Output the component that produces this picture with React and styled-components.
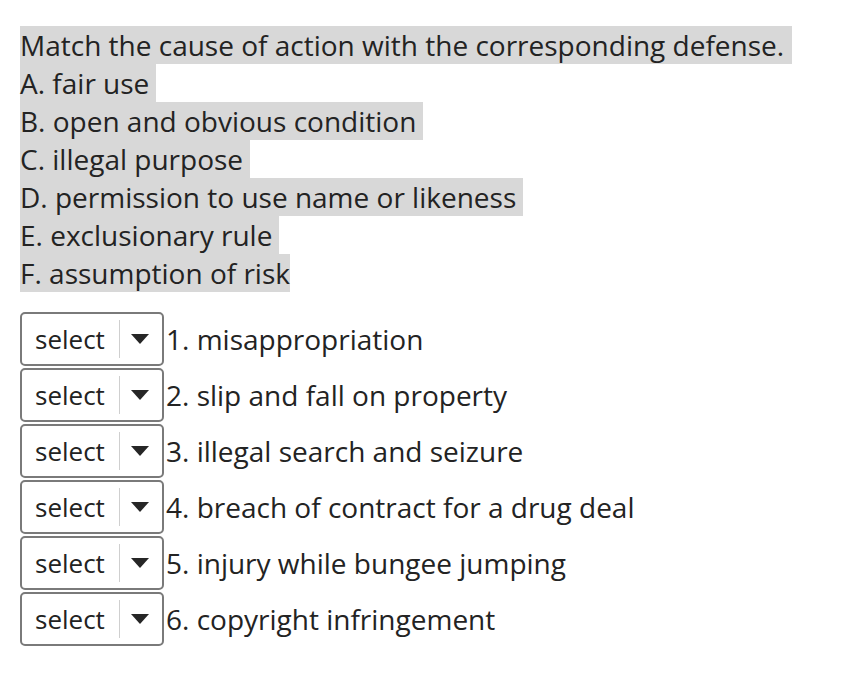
import React from "react";
import styled, { createGlobalStyle } from "styled-components";

const Global = createGlobalStyle`
  html, body { margin: 0; padding: 0; background: #fff; }
  body { font-family: "Open Sans", "DejaVu Sans", sans-serif; color: #232323; }
`;

const Page = styled.div`
  padding: 26px 20px 0 20px;
`;

const Prompt = styled.div`
  display: flex;
  flex-direction: column;
  align-items: flex-start;
`;

const Line = styled.div`
  background: #d8d8d8;
  font-size: 28px;
  line-height: 38px;
  height: 38px;
  padding-right: ${(p) => p.$pad ?? 7}px;
  white-space: nowrap;
`;

const Rows = styled.div`
  margin-top: 20px;
  display: flex;
  flex-direction: column;
  gap: 2px;
`;

const Row = styled.div`
  display: flex;
  align-items: center;
  gap: 2px;
`;

const SelectBox = styled.div`
  box-sizing: border-box;
  width: 144px;
  height: 54px;
  border: 2px solid #7a7a7a;
  border-radius: 5px;
  display: flex;
  align-items: center;
  padding-left: 13px;
  background: #fff;
`;

const SelectText = styled.span`
  font-size: 26px;
  color: #222;
  width: 84px;
`;

const Divider = styled.span`
  width: 1px;
  height: 38px;
  background: #cfcfcf;
`;

const Arrow = styled.span`
  margin-left: 11px;
  width: 0;
  height: 0;
  border-left: 9.5px solid transparent;
  border-right: 9.5px solid transparent;
  border-top: 10px solid #262626;
`;

const Label = styled.span`
  font-size: 28px;
  line-height: 38px;
  white-space: nowrap;
`;

const lines = [
  ["Match the cause of action with the corresponding defense.", 8],
  ["A. fair use", 7],
  ["B. open and obvious condition", 7],
  ["C. illegal purpose", 7],
  ["D. permission to use name or likeness", 7],
  ["E. exclusionary rule", 7],
  ["F. assumption of risk", 0],
];

const items = [
  "1. misappropriation",
  "2. slip and fall on property",
  "3. illegal search and seizure",
  "4. breach of contract for a drug deal",
  "5. injury while bungee jumping",
  "6. copyright infringement",
];

export default function App() {
  return (
    <>
      <Global />
      <Page>
        <Prompt>
          {lines.map(([t, pad]) => (
            <Line key={t} $pad={pad}>{t}</Line>
          ))}
        </Prompt>
        <Rows>
          {items.map((t) => (
            <Row key={t}>
              <SelectBox>
                <SelectText>select</SelectText>
                <Divider />
                <Arrow />
              </SelectBox>
              <Label>{t}</Label>
            </Row>
          ))}
        </Rows>
      </Page>
    </>
  );
}
